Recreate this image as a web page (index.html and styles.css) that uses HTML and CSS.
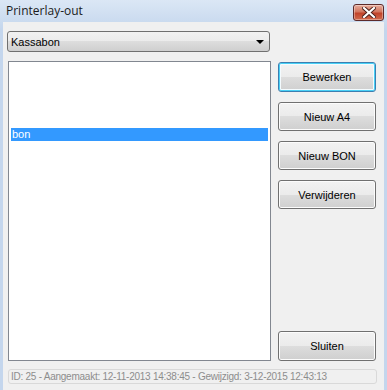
FILE: index.html
```html
<!DOCTYPE html>
<html lang="nl">

<head>
  <meta charset="UTF-8">
  <title>Printerlay-out</title>
  <link rel="stylesheet" href="styles.css">
</head>

<body>

  <div class="window">
    <div class="titlebar">
      <span class="title">Printerlay-out</span>
      <button class="close-btn" title="Sluiten">
        <svg width="14" height="11" viewBox="0 0 14 11">
          <path d="M2 1 L12 10 M12 1 L2 10" stroke="#4a1f1a" stroke-width="4" stroke-linecap="square" />
          <path d="M2 1 L12 10 M12 1 L2 10" stroke="#ffffff" stroke-width="2.2" stroke-linecap="square" />
        </svg>
      </button>
    </div>

    <div class="client">
      <div class="combo">
        <span>Kassabon</span>
        <span class="arrow"></span>
      </div>

      <div class="main">
        <ul class="listbox">
          <li></li>
          <li></li>
          <li></li>
          <li></li>
          <li></li>
          <li class="selected">bon</li>
        </ul>

        <div class="buttons">
          <button class="btn default">Bewerken</button>
          <button class="btn">Nieuw A4</button>
          <button class="btn">Nieuw BON</button>
          <button class="btn">Verwijderen</button>
          <button class="btn close">Sluiten</button>
        </div>
      </div>

      <div class="status">ID: 25 - Aangemaakt: 12-11-2013 14:38:45 - Gewijzigd: 3-12-2015 12:43:13</div>
    </div>
  </div>

</body>

</html>
```

FILE: styles.css
```css
body {
  margin: 0;
  font-family: 'Liberation Sans', Arial, sans-serif;
  font-size: 11px;
  background-color: #c4d6ed;
}

.window {
  width: 387px;
  height: 390px;
  box-sizing: border-box;
  display: flex;
  flex-direction: column;
  background: linear-gradient(#dbe7f5, #c4d6ed 30px);
  padding: 0 3px;
}

.titlebar {
  height: 22px;
  display: flex;
  align-items: center;
  justify-content: space-between;
}

.title {
  font-family: 'Open Sans', sans-serif;
  font-size: 12px;
  color: #1b1b1b;
  padding-left: 3px;
  margin-top: -1px;
}

.close-btn {
  width: 31px;
  height: 17px;
  margin-top: 2px;
  padding: 0;
  display: flex;
  align-items: center;
  justify-content: center;
  border: 1px solid #5c2a2a;
  border-radius: 3px;
  background: linear-gradient(#e7ad9e, #d2765f 45%, #c1432a 55%, #d06a4e);
  box-shadow: inset 0 0 0 1px rgba(255, 255, 255, 0.35);
}

.client {
  flex: 1;
  background-color: #f0f0f0;
  padding: 9px 0 0 4px;
  display: flex;
  flex-direction: column;
}

.combo {
  width: 263px;
  height: 21px;
  box-sizing: border-box;
  border: 1px solid #707070;
  border-radius: 3px;
  background: linear-gradient(#f2f2f2, #ebebeb 50%, #dddddd 50%, #cfcfcf);
  display: flex;
  align-items: center;
  justify-content: space-between;
  padding: 0 5px 0 3px;
  color: #000;
}

.arrow {
  width: 0;
  height: 0;
  border-left: 4px solid transparent;
  border-right: 4px solid transparent;
  border-top: 4px solid #000;
}

.main {
  display: flex;
  gap: 7px;
  margin-top: 9px;
  margin-left: 1px;
}

.listbox {
  list-style: none;
  margin: 0;
  padding: 1px 2px;
  width: 263px;
  height: 300px;
  box-sizing: border-box;
  border: 1px solid #828790;
  background-color: #fff;
}

.listbox li {
  height: 13px;
  line-height: 13px;
  padding-left: 1px;
}

.listbox li.selected {
  background-color: #3399ff;
  color: #fff;
}

.buttons {
  width: 98px;
  display: flex;
  flex-direction: column;
  gap: 10px;
  padding-top: 1px;
}

.btn {
  height: 30px;
  box-sizing: border-box;
  font-family: 'Liberation Sans', Arial, sans-serif;
  font-size: 11px;
  color: #000;
  border: 1px solid #707070;
  border-radius: 3px;
  background: linear-gradient(#f2f2f2, #ebebeb 50%, #dddddd 50%, #cfcfcf);
  box-shadow: inset 0 0 0 1px #fcfcfc;
  padding: 0;
}

.btn.default {
  border-color: #3c7fb1;
  box-shadow: inset 0 0 0 1px #48d0f6, inset 0 0 0 2px #f4fbfe;
}

.btn.close {
  margin-top: auto;
}

.main .buttons .btn + .btn {
  height: 29px;
}

.main .buttons .btn.close {
  height: 30px;
}

.status {
  margin: 8px 7px 0 1px;
  height: 15px;
  box-sizing: border-box;
  border: 1px solid #d9d9d9;
  border-radius: 3px;
  color: #8d8d8d;
  font-size: 10px;
  letter-spacing: -0.25px;
  line-height: 13px;
  padding-left: 2px;
  white-space: nowrap;
  overflow: hidden;
}
```
